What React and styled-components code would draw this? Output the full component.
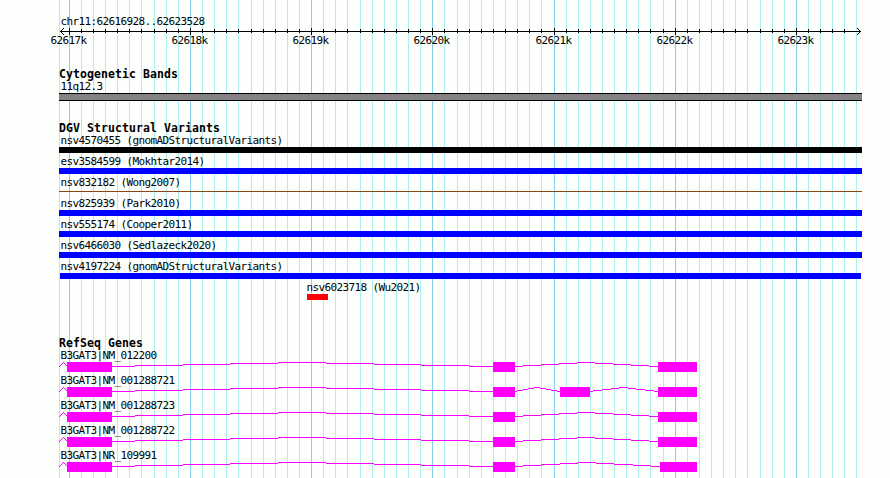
import React from 'react'
import styled, { createGlobalStyle } from 'styled-components'

const LEFT = 59
const RIGHT = 862
const HEIGHT = 478

const GlobalStyle = createGlobalStyle`
  body {
    margin: 0;
    background: #fdfffc;
    overflow: hidden;
  }
`

const Panel = styled.main`
  display: grid;
  width: 890px;
  height: ${HEIGHT}px;
  overflow: hidden;
  color: #000;
  font-family: 'DejaVu Sans Mono', monospace;
  font-size: 11px;
  line-height: 13px;
  letter-spacing: -0.622px;
  white-space: pre;

  > * {
    grid-area: 1 / 1;
  }
`

const Drawing = styled.svg`
  display: block;
  overflow: visible;
  shape-rendering: crispEdges;
`

const Tracks = styled.div`
  display: flex;
  flex-direction: column;
  width: ${RIGHT - LEFT}px;
  padding: 15px 0 0 ${LEFT}px;
`

const Track = styled.section`
  margin-top: ${props => props.$gap}px;
`

const Title = styled.h2`
  height: 12px;
  margin: 0;
  font-size: 11.5px;
  font-weight: bold;
  letter-spacing: 0.077px;
`

const Feature = styled.div`
  padding-bottom: 2px;
`

const Label = styled.div`
  height: 13px;
  padding-left: ${props => (props.$from || LEFT) - LEFT + 1.4}px;
`

const Band = styled.div`
  box-sizing: border-box;
  height: 8px;
  background: #848284;
  border: solid #000;
  border-width: 1px 0;
`

const Bar = styled.div`
  height: ${props => (props.$thin ? 1 : 6)}px;
  width: ${props => props.$to - props.$from}px;
  margin: ${props => (props.$thin ? '2px 0 3px' : '0')};
  margin-left: ${props => props.$from - LEFT}px;
  background: ${props => props.$color};
`

// minor ticks after which the rounded spacing is 13px instead of 12px
const wideTicks = [7, 15, 24, 32, 40, 49, 57]

const ticks = Array.from({ length: 66 }, (_, i) => ({
  x: 69 + i * 12 + wideTicks.filter(k => k <= i).length,
  label: i % 10 === 0 ? `${62617 + i / 10}k` : null,
}))

const variants = [
  { name: 'nsv4570455 (gnomADStructuralVariants)', color: '#000' },
  { name: 'esv3584599 (Mokhtar2014)', color: '#00f' },
  { name: 'nsv832182 (Wong2007)', color: '#8b4513', thin: true },
  { name: 'nsv825939 (Park2010)', color: '#00f' },
  { name: 'nsv555174 (Cooper2011)', color: '#00f' },
  { name: 'nsv6466030 (Sedlazeck2020)', color: '#00f' },
  {
    name: 'nsv4197224 (gnomADStructuralVariants)',
    color: '#00f',
    from: 60,
    to: 861,
  },
  {
    name: 'nsv6023718 (Wu2021)',
    color: '#f00',
    from: 307,
    to: 328,
    labelFrom: 305,
  },
]

const exons = [[67, 112], [493, 515], [658, 697]]

const genes = [
  { name: 'B3GAT3|NM_012200', exons },
  {
    name: 'B3GAT3|NM_001288721',
    exons: [[67, 112], [493, 515], [560, 590], [658, 697]],
  },
  { name: 'B3GAT3|NM_001288723', exons },
  { name: 'B3GAT3|NM_001288722', exons },
  { name: 'B3GAT3|NR_109991', exons: [[67, 112], [493, 515], [660, 697]] },
]

const GridLines = () => (
  <Drawing width="890" height={HEIGHT}>
    <rect x={LEFT} y="0" width="1" height={HEIGHT} fill="#afeeee" />
    {ticks.map(({ x, label }) => (
      <rect
        key={x}
        x={x}
        y="0"
        width="1"
        height={HEIGHT}
        fill={label ? '#87ceeb' : '#afeeee'}
      />
    ))}
  </Drawing>
)

const Ruler = () => (
  <Drawing width="803" height="20" viewBox={`${LEFT} 28 803 20`}>
    <rect x="60" y="31" width="801" height="1" />
    {[0, 1, 2, 3].map(d => (
      <g key={d}>
        <rect x={60 + d} y={31 - d} width="1" height="1" />
        <rect x={60 + d} y={31 + d} width="1" height="1" />
        <rect x={860 - d} y={31 - d} width="1" height="1" />
        <rect x={860 - d} y={31 + d} width="1" height="1" />
      </g>
    ))}
    {ticks.slice(0, -1).map(({ x, label }) => (
      <g key={x}>
        <rect
          x={x}
          y={label ? 28 : 29}
          width="1"
          height={label ? 7 : 4}
        />
        {label && <text x={x - 18.6} y="44">{label}</text>}
      </g>
    ))}
  </Drawing>
)

// an intron is a shallow hat, stepped one pixel at a time
const Intron = ({ from, to }) => {
  const step = (to - from) / 8
  const edges = [0, 0.5, 1.5, 2.5, 3.5, 4.5, 5.5, 6.5, 7.5, 8].map(n =>
    Math.round(from + n * step),
  )

  return [4, 3, 2, 1, 0, 1, 2, 3, 4].map((y, i) => (
    <rect
      key={i}
      x={edges[i]}
      y={y}
      width={edges[i + 1] - edges[i]}
      height="1"
    />
  ))
}

const Gene = ({ parts }) => (
  <Drawing
    width="803"
    height="10"
    viewBox={`${LEFT} 0 803 10`}
    fill="#f0f"
  >
    {[4, 3, 2, 1, 0, 1, 2, 3].map((y, i) => (
      <rect key={i} x={LEFT + i} y={y} width="1" height="1" />
    ))}
    {parts.map(([from, to], i) => (
      <g key={from}>
        {i > 0 && <Intron from={parts[i - 1][1] - 1} to={from} />}
        <rect x={from} y="0" width={to - from} height="10" />
      </g>
    ))}
  </Drawing>
)

const App = () => (
  <>
    <GlobalStyle />
    <Panel>
      <GridLines />
      <Tracks>
        <Label>chr11:62616928..62623528</Label>
        <Ruler />

        <Track $gap={20}>
          <Title>Cytogenetic Bands</Title>
          <Label>11q12.3</Label>
          <Band />
        </Track>

        <Track $gap={21}>
          <Title>DGV Structural Variants</Title>
          {variants.map(({ name, color, thin, from, to, labelFrom }) => (
            <Feature key={name}>
              <Label $from={labelFrom}>{name}</Label>
              <Bar
                $color={color}
                $thin={thin}
                $from={from || LEFT}
                $to={to || RIGHT}
              />
            </Feature>
          ))}
        </Track>

        <Track $gap={35}>
          <Title>RefSeq Genes</Title>
          {genes.map(gene => (
            <Feature key={gene.name}>
              <Label>{gene.name}</Label>
              <Gene parts={gene.exons} />
            </Feature>
          ))}
        </Track>
      </Tracks>
    </Panel>
  </>
)

export default App
